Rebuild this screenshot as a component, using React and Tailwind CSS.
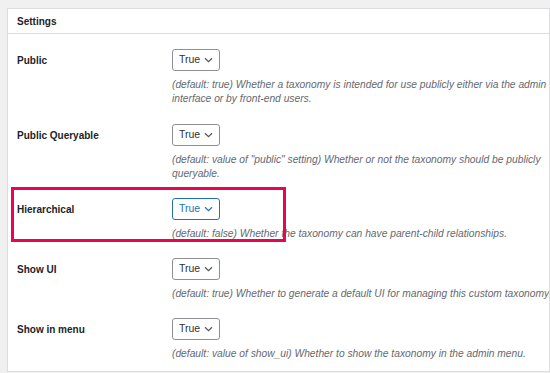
import React from "react";

function Chevron() {
  return (
    <svg width="9" height="6" viewBox="0 0 9 6" fill="none" className="shrink-0">
      <path d="M1 1.2 L4.5 4.6 L8 1.2" stroke="currentColor" strokeWidth="1.2" />
    </svg>
  );
}

function Select({ active }) {
  return (
    <div
      className={
        "flex h-[22px] w-[48px] items-center rounded-[3px] border bg-white pl-[6px] pr-[6px] text-[10.5px] " +
        (active ? "border-[#2271b1] text-[#2271b1]" : "border-[#8c8f94] text-[#2c3338]")
      }
    >
      <span className="flex-1">True</span>
      <span className={active ? "text-[#2271b1]" : "text-[#50575e]"}>
        <Chevron />
      </span>
    </div>
  );
}

function Row({ label, lines, active, first }) {
  return (
    <div className={"flex items-start pt-[8px] " + (first ? "pb-[10px]" : "pb-[9px]")}>
      <div className="flex h-[22px] w-[155px] shrink-0 items-center text-[10px] font-bold text-[#1d2327]">
        {label}
      </div>
      <div className="flex flex-col">
        <Select active={active} />
        <div className="mt-[7px] text-[10.25px] italic leading-[14px] text-[#646970]">
          {lines.map((l, i) => (
            <div key={i} className="whitespace-nowrap">{l}</div>
          ))}
        </div>
      </div>
    </div>
  );
}

export default function App() {
  return (
    <div
      className="h-[373px] w-[550px] overflow-hidden bg-[#f0f0f1] pl-[7px] pt-[8px]"
      style={{ fontFamily: '"Liberation Sans", Arial, sans-serif' }}
    >
      <div className="relative h-[364px] w-[543px] overflow-hidden border border-[#dcdcde] bg-white">
        <div className="flex h-[25px] items-center border-b border-[#dcdcde] pl-[9px] text-[10px] font-bold text-[#1d2327]">
          Settings
        </div>
        <div className="pl-[9px] pt-[7px]">
          <Row
            first
            label="Public"
            lines={[
              "(default: true) Whether a taxonomy is intended for use publicly either via the admin",
              "interface or by front-end users.",
            ]}
          />
          <Row
            label="Public Queryable"
            lines={[
              '(default: value of "public" setting) Whether or not the taxonomy should be publicly',
              "queryable.",
            ]}
          />
          <Row
            label="Hierarchical"
            active
            lines={["(default: false) Whether the taxonomy can have parent-child relationships."]}
          />
          <Row
            label="Show UI"
            lines={["(default: true) Whether to generate a default UI for managing this custom taxonomy."]}
          />
          <Row
            label="Show in menu"
            lines={["(default: value of show_ui) Whether to show the taxonomy in the admin menu."]}
          />
        </div>
        <div className="absolute left-[3px] top-[178px] h-[55px] w-[275px] border-[3px] border-[#e6084f]" />
      </div>
    </div>
  );
}
